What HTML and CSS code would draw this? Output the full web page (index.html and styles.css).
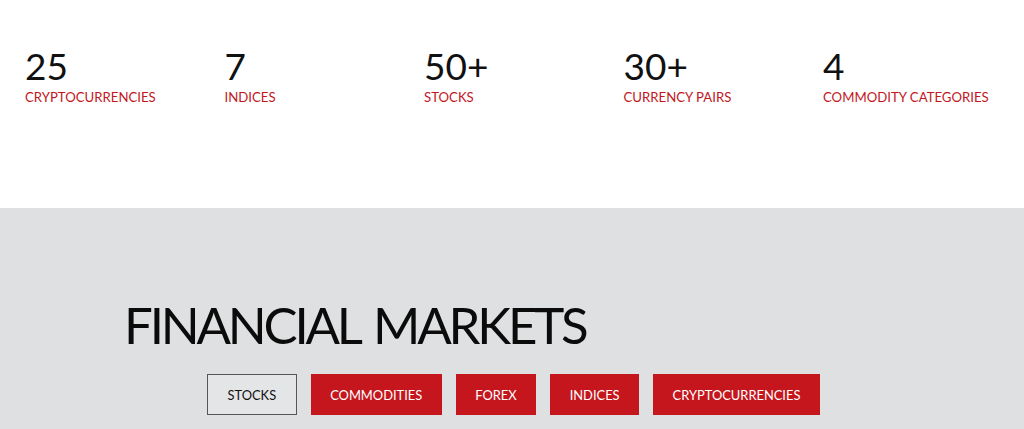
FILE: index.html
```
<!DOCTYPE html>
<html>
<head>
<meta charset="utf-8">
<link rel="stylesheet" href="styles.css">
</head>
<body>
<section class="stats">
  <div class="stat"><div class="num">25</div><div class="label">CRYPTOCURRENCIES</div></div>
  <div class="stat"><div class="num">7</div><div class="label">INDICES</div></div>
  <div class="stat"><div class="num">50+</div><div class="label">STOCKS</div></div>
  <div class="stat"><div class="num">30+</div><div class="label">CURRENCY PAIRS</div></div>
  <div class="stat"><div class="num">4</div><div class="label">COMMODITY CATEGORIES</div></div>
</section>
<section class="markets">
  <h2 class="title">FINANCIAL MARKETS</h2>
  <div class="tabs">
    <button class="tab active">STOCKS</button>
    <button class="tab">COMMODITIES</button>
    <button class="tab">FOREX</button>
    <button class="tab">INDICES</button>
    <button class="tab">CRYPTOCURRENCIES</button>
  </div>
</section>
</body>
</html>
```
FILE: styles.css
```
html, body {
  margin: 0;
  padding: 0;
  background: #dfe0e1;
  font-family: "Lato", "Noto Sans", sans-serif;
}
.stats {
  background: #ffffff;
  height: 208px;
  box-sizing: border-box;
  padding: 46px 0 0 25px;
  display: grid;
  grid-template-columns: repeat(5, 199.5px);
  align-content: start;
}
.num {
  font-size: 37px;
  line-height: 40px;
  color: #111;
  font-weight: 400;
}
.label {
  font-size: 13.2px;
  color: #c2171d;
  margin-top: 3px;
  line-height: 16px;
}
.title {
  margin: 0;
  padding: 88px 0 0 124px;
  font-size: 51px;
  line-height: 58px;
  font-weight: 400;
  color: #0b0b0b;
  letter-spacing: -3.2px;
  word-spacing: 5px;
}
.tabs {
  display: flex;
  gap: 14px;
  padding: 20px 0 0 207px;
}
.tab {
  font-family: inherit;
  height: 41px;
  padding: 0 18.5px;
  font-size: 12.9px;
  border: 1px solid #c4161c;
  background: #c4161c;
  color: #fff;
  cursor: pointer;
}
.tab.active {
  background: #e4e5e6;
  border: 1px solid #555;
  color: #111;
  padding: 0 19.5px;
}
```
